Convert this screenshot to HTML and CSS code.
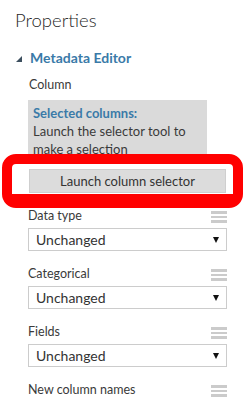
FILE: index.html
```html
<!DOCTYPE html>
<html lang="en">

<head>
  <meta charset="UTF-8">
  <meta name="viewport" content="width=device-width, initial-scale=1.0">
  <title>Properties</title>
  <link rel="stylesheet" href="styles.css">
</head>

<body>
  <div class="panel">
    <h1 class="title">Properties</h1>

    <div class="section-header">
      <span class="caret"></span>
      <span class="section-name">Metadata Editor</span>
    </div>

    <div class="label column-label">Column</div>
    <div class="selected-box">
      <div class="selected-title">Selected columns:</div>
      <div class="selected-text">Launch the selector tool to make a selection</div>
    </div>

    <div class="highlight">
      <button class="launch-button">Launch column selector</button>
    </div>

    <div class="fields">
      <div class="field">
        <div class="field-head">
          <span class="label">Data type</span>
          <span class="handle"><i></i><i></i><i></i></span>
        </div>
        <div class="select"><span>Unchanged</span><span class="arrow"></span></div>
      </div>

      <div class="field">
        <div class="field-head">
          <span class="label">Categorical</span>
          <span class="handle"><i></i><i></i><i></i></span>
        </div>
        <div class="select"><span>Unchanged</span><span class="arrow"></span></div>
      </div>

      <div class="field">
        <div class="field-head">
          <span class="label">Fields</span>
          <span class="handle"><i></i><i></i><i></i></span>
        </div>
        <div class="select"><span>Unchanged</span><span class="arrow"></span></div>
      </div>

      <div class="field">
        <div class="field-head">
          <span class="label">New column names</span>
          <span class="handle"><i></i><i></i><i></i></span>
        </div>
      </div>
    </div>
  </div>
</body>

</html>
```

FILE: styles.css
```css
body {
  margin: 0;
  background-color: #fff;
  font-family: 'Lato', 'Open Sans', sans-serif;
  color: #444;
  overflow: hidden;
}

.panel {
  padding: 8px 0 0 0;
}

.title {
  margin: 0 0 0 15px;
  font-size: 18.5px;
  font-weight: 300;
  color: #1f1f1f;
  line-height: 24px;
}

.section-header {
  display: flex;
  align-items: center;
  margin: 15px 0 0 16px;
  height: 20px;
}

.caret {
  width: 0;
  height: 0;
  border-left: 6px solid transparent;
  border-bottom: 6px solid #3c4f5e;
  margin-right: 8px;
  margin-top: 3px;
}

.section-name {
  font-size: 14px;
  font-weight: 700;
  color: #3a7aa8;
}

.label {
  font-size: 12.5px;
  color: #3a3a3a;
}

.column-label {
  margin: 10px 0 0 29px;
  line-height: 16px;
}

.selected-box {
  margin: 7px 0 0 28px;
  width: 169px;
  height: 54px;
  padding: 4px 5px;
  background-color: #dadada;
  font-size: 13px;
  line-height: 18px;
  color: #3a3a3a;
}

.selected-title {
  font-weight: 700;
  color: #3a7aa8;
}

.highlight {
  position: relative;
  margin: -8px 3px 0 2px;
  height: 25px;
  padding: 5px 0 0 17px;
  border: 10px solid #ff0000;
  border-bottom-width: 14px;
  border-radius: 14px;
  background-color: #fff;
}

.launch-button {
  display: block;
  width: 197px;
  height: 24px;
  padding: 0;
  border: 1px solid #cfcfcf;
  background-color: #dcdcdc;
  font-family: inherit;
  font-size: 13px;
  color: #333;
}

.fields {
  margin: -3px 0 0 28px;
  width: 199px;
}

.field-head {
  display: flex;
  justify-content: space-between;
  align-items: center;
  height: 20px;
}

.handle {
  display: flex;
  flex-direction: column;
  gap: 2px;
  width: 16px;
  margin-top: 4px;
}

.handle i {
  display: block;
  height: 2.5px;
  background-color: #cbcbcb;
}

.select {
  display: flex;
  justify-content: space-between;
  align-items: center;
  margin-top: 3px;
  margin-bottom: 12px;
  height: 21px;
  padding: 0 7px 0 7px;
  border: 1px solid #cccccc;
  font-size: 14px;
  color: #333;
}

.arrow {
  width: 0;
  height: 0;
  border-left: 3.5px solid transparent;
  border-right: 3.5px solid transparent;
  border-top: 6px solid #111;
}
```
